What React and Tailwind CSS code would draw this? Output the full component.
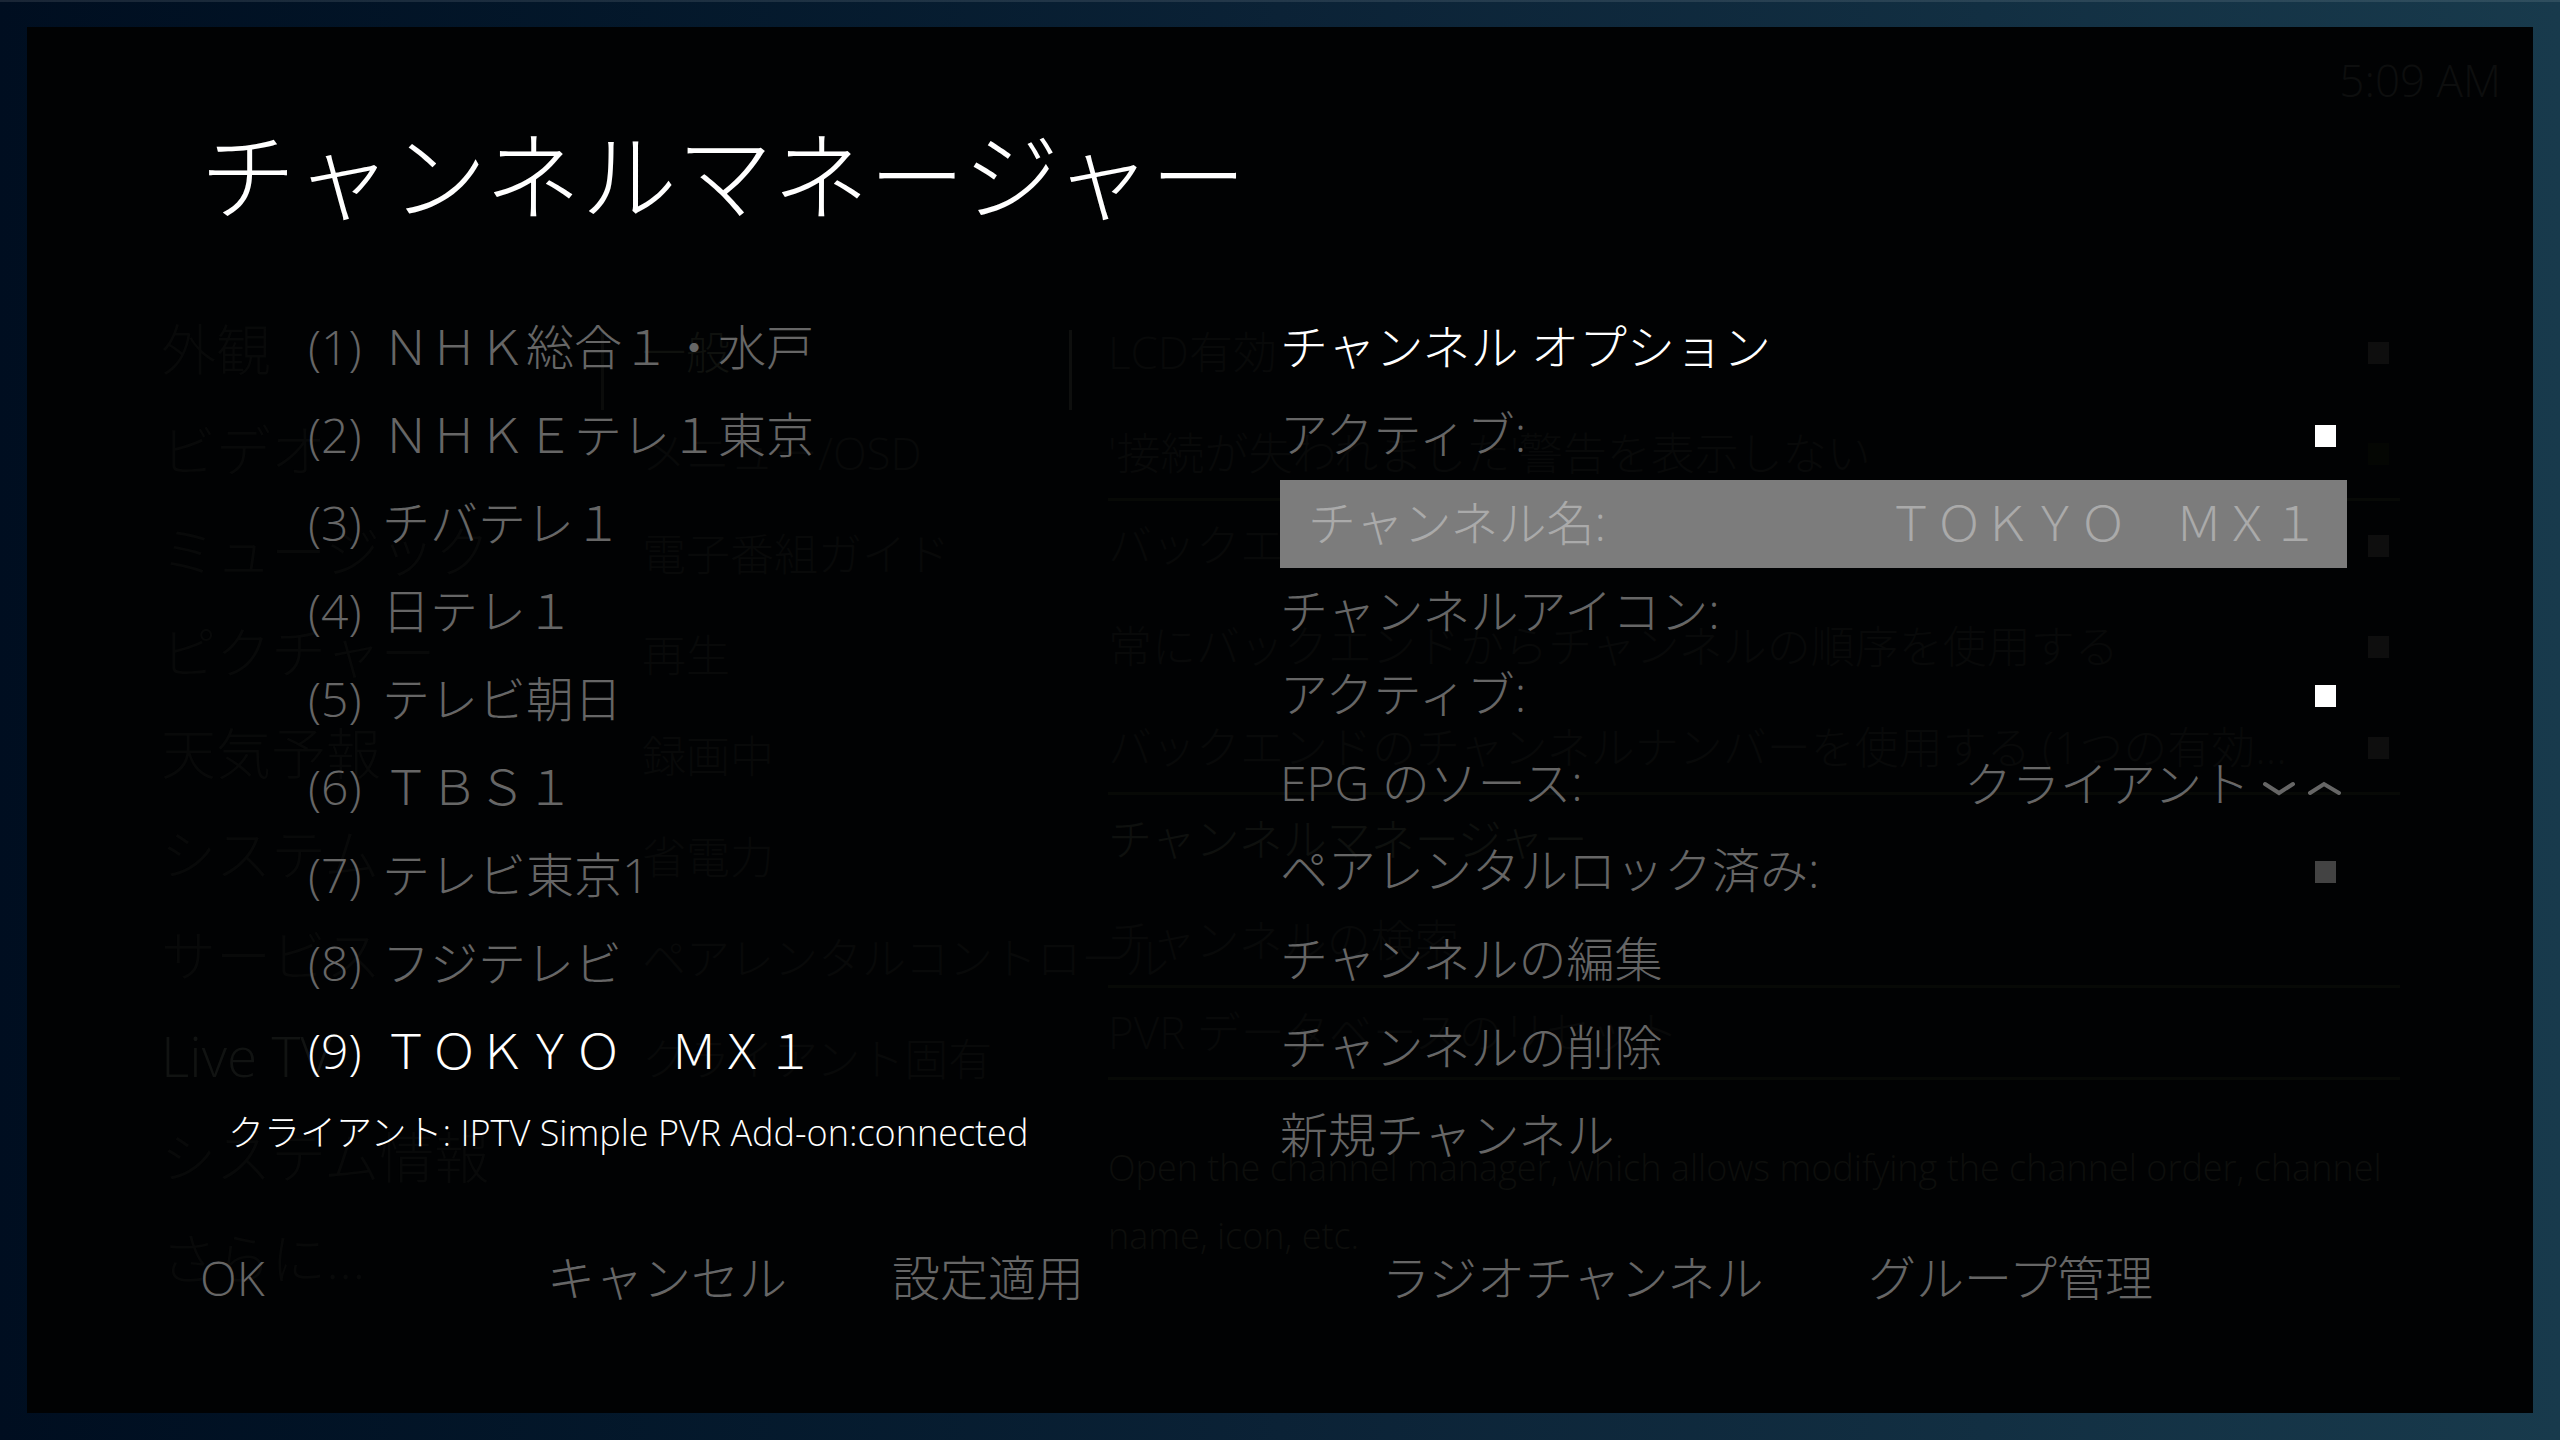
import React, { useState } from "react";

const channels = [
  "ＮＨＫ総合１・水戸",
  "ＮＨＫＥテレ１東京",
  "チバテレ１",
  "日テレ１",
  "テレビ朝日",
  "ＴＢＳ１",
  "テレビ東京1",
  "フジテレビ",
  "ＴＯＫＹＯ　ＭＸ１",
];

const sections = [
  "外観",
  "ビデオ",
  "ミュージック",
  "ピクチャー",
  "天気予報",
  "システム",
  "サービス",
  "Live TV",
  "システム情報",
  "さらに...",
];

const categories = [
  "一般",
  "メニュー/OSD",
  "電子番組ガイド",
  "再生",
  "録画中",
  "省電力",
  "ペアレンタルコントロール",
  "クライアント固有",
];

const settingGroups = [
  [
    { label: "LCD有効", box: "bg-[#0e0e0e]" },
    { label: "'接続が失われました'警告を表示しない", box: "bg-[#040603]" },
  ],
  [
    { label: "バックエンドと同期する", box: "bg-[#0e0e0e]" },
    { label: "常にバックエンドからチャンネルの順序を使用する", box: "bg-[#0e0e0e]" },
    { label: "バックエンドのチャンネルナンバーを使用する (1つの有効...", box: "bg-[#0e0e0e]" },
  ],
  [{ label: "チャンネルマネージャー", bright: true }, { label: "チャンネルの検索" }],
  [{ label: "PVR データベースのリセット" }],
];

function SettingsBackdrop() {
  return (
    <div
      aria-hidden="true"
      className="flex min-h-[calc(100vh-54px)] flex-col bg-[#010203] text-[#080909] select-none"
    >
      <div className="flex justify-end pt-7 pr-8 text-[44px] leading-[50px] text-[#0d0e0e]">5:09 AM</div>
      <div className="grid grid-cols-[minmax(0,574fr)_minmax(0,41fr)_minmax(0,427fr)_minmax(0,39fr)_minmax(0,1425fr)] pt-[193px]">
        <ul className="pl-[134px] text-[55px] leading-[101px] whitespace-nowrap">
          {sections.map((s) => (
            <li key={s} className={s === "Live TV" ? "text-[#111312]" : ""}>
              {s}
            </li>
          ))}
        </ul>
        <div className="mt-8 h-20 w-[3px] bg-[#0b0c0b]" />
        <ul className="pt-1 text-[44px] leading-[101px] whitespace-nowrap">
          {categories.map((c, i) => (
            <li key={c} className={i === 0 ? "text-[#0f110e]" : ""}>
              {c}
            </li>
          ))}
        </ul>
        <div className="mt-8 h-20 w-[3px] bg-[#0e0f0e]" />
        <div className="pt-[10px] pr-[133px] text-[44px] leading-[89px]">
          {settingGroups.map((group, i) => (
            <div key={i} className="flex flex-col gap-3 border-b-3 border-[#070906]">
              {group.map((row) => (
                <div key={row.label} className="flex items-center justify-between pr-[11px] whitespace-nowrap">
                  <span className={row.bright ? "text-[#0e100e]" : ""}>{row.label}</span>
                  {row.box && <span className={"h-[22px] w-[21px] " + row.box} />}
                </div>
              ))}
            </div>
          ))}
          <p className="mt-[54px] text-[36px] leading-[68px] text-[#0d0e0c]">
            Open the channel manager, which allows modifying the channel order, channel name, icon, etc.
          </p>
        </div>
      </div>
    </div>
  );
}

const rowClass = "flex h-[88px] w-full items-center justify-between whitespace-nowrap";

function CheckRow({ id, label, checked, onChange }) {
  return (
    <div className={rowClass + " pr-[11px]"}>
      <label htmlFor={id} className="pb-1">
        {label}
      </label>
      <input
        id={id}
        type="checkbox"
        checked={checked}
        onChange={(e) => onChange(e.target.checked)}
        className="h-[22px] w-[21px] appearance-none bg-[#434343] checked:bg-white"
      />
    </div>
  );
}

function Chevron({ up }) {
  return (
    <svg
      viewBox="0 0 34 16"
      className="h-4 w-[34px]"
      fill="none"
      stroke="currentColor"
      strokeWidth="4"
      strokeLinecap="round"
    >
      <path d={up ? "M2 13 L16 4 L31 13" : "M3 4 L17 13 L31 4"} />
    </svg>
  );
}

export default function App() {
  const [selected, setSelected] = useState(8);
  const [active, setActive] = useState(true);
  const [epgActive, setEpgActive] = useState(true);
  const [locked, setLocked] = useState(false);

  return (
    <main
      lang="ja"
      className="relative min-h-screen overflow-hidden border-t-2 border-white/10 bg-linear-to-r from-[#000e20] via-[#0b2236] to-[#183a4c] px-[27px] pt-[25px] pb-[27px] font-['Open_Sans','Noto_Sans_CJK_JP',sans-serif] font-light"
    >
      <SettingsBackdrop />

      <section
        role="dialog"
        aria-labelledby="dialog-title"
        className="absolute inset-x-[27px] top-[25px] bottom-[27px] pt-[100px] pr-[186px] pl-[173px] text-[48px] leading-[88px] text-[#666]"
      >
        <h1 id="dialog-title" className="text-[96px] leading-[96px] text-white">
          チャンネルマネージャー
        </h1>

        <div className="mt-[81px] grid grid-cols-[1080fr_1067fr]">
          <div>
            <ul className="pl-[108px]">
              {channels.map((name, i) => (
                <li key={name}>
                  <button
                    type="button"
                    onClick={() => setSelected(i)}
                    className={
                      "flex h-[88px] items-center pb-[2px] whitespace-nowrap " + (i === selected ? "text-white" : "")
                    }
                  >
                    <span className="w-[74px] text-left">({i + 1})</span>
                    <span>{name}</span>
                  </button>
                </li>
              ))}
            </ul>
            <p className="pl-[28px] text-[36px] leading-[74px] text-white">
              クライアント: IPTV Simple PVR Add-on:connected
            </p>
          </div>

          <div>
            <h2 className="h-[88px] leading-[86px] text-white">チャンネル オプション</h2>
            <CheckRow id="active" label="アクティブ:" checked={active} onChange={setActive} />
            <button type="button" className={rowClass + " bg-[#7c7c7c] px-[28px] pb-[2px] text-[#aaa]"}>
              <span>チャンネル名:</span>
              <span>ＴＯＫＹＯ　ＭＸ１</span>
            </button>
            <button type="button" className={rowClass + " pb-[2px]"}>
              チャンネルアイコン:
            </button>
            <div className="-mt-1">
              <CheckRow id="epg-active" label="アクティブ:" checked={epgActive} onChange={setEpgActive} />
              <div className={rowClass + " pr-[5px]"}>
                <span className="pb-[2px]">EPG のソース:</span>
                <span className="flex items-center gap-3 pt-2">
                  <span className="pb-2">クライアント</span>
                  <button type="button" aria-label="次のソース">
                    <Chevron />
                  </button>
                  <button type="button" aria-label="前のソース">
                    <Chevron up />
                  </button>
                </span>
              </div>
              <CheckRow id="locked" label="ペアレンタルロック済み:" checked={locked} onChange={setLocked} />
              <button type="button" className={rowClass + " pb-[2px]"}>
                チャンネルの編集
              </button>
              <button type="button" className={rowClass + " pb-[2px]"}>
                チャンネルの削除
              </button>
              <button type="button" className={rowClass + " pb-[2px]"}>
                新規チャンネル
              </button>
            </div>
          </div>
        </div>

        <footer className="mt-[54px] grid grid-cols-[347fr_345fr_490fr_486fr_479fr] justify-items-start whitespace-nowrap">
          <button type="button">OK</button>
          <button type="button">キャンセル</button>
          <button type="button">設定適用</button>
          <button type="button">ラジオチャンネル</button>
          <button type="button">グループ管理</button>
        </footer>
      </section>
    </main>
  );
}
